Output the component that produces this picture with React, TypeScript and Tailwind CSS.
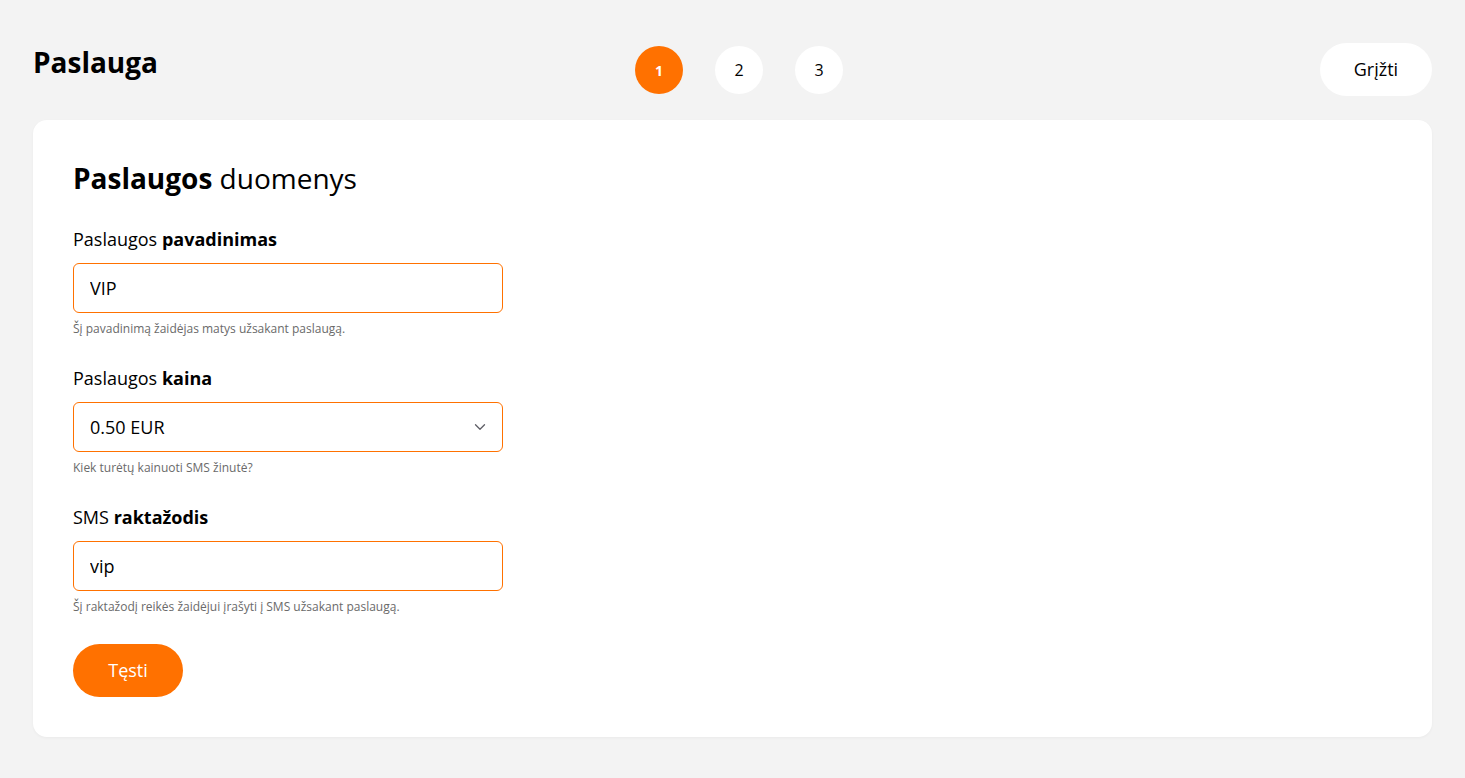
import { ChevronDown } from "lucide-react";

const ORANGE = "bg-[#ff7100]";

function Field({
  label,
  strong,
  help,
  children,
}: {
  label: string;
  strong: string;
  help: string;
  children: React.ReactNode;
}) {
  return (
    <div className="flex flex-col">
      <label className="text-[18px] leading-6 text-black">
        {label} <span className="font-bold">{strong}</span>
      </label>
      <div className="mt-3">{children}</div>
      <p className="mt-2 text-[12px] leading-4 text-[#6a6a6a]">{help}</p>
    </div>
  );
}

export default function App() {
  const steps = [1, 2, 3];

  return (
    <div
      className="min-h-screen bg-[#f3f3f3] px-[33px] pt-[43px] pb-10 text-black"
      style={{ fontFamily: "'Open Sans', Lato, sans-serif" }}
    >
      {/* Header */}
      <div className="flex items-start justify-between">
        <h1 className="mt-[3px] text-[28px] font-bold leading-8">Paslauga</h1>

        <div className="mt-[3px] flex gap-8">
          {steps.map((s) =>
            s === 1 ? (
              <div
                key={s}
                className={`flex h-12 w-12 items-center justify-center rounded-full ${ORANGE} text-[14px] font-bold text-white`}
              >
                {s}
              </div>
            ) : (
              <div
                key={s}
                className="flex h-12 w-12 items-center justify-center rounded-full bg-white text-[16px] text-black"
              >
                {s}
              </div>
            )
          )}
        </div>

        <button className="h-[53px] w-[112px] rounded-full bg-white text-[18px] text-black">
          Grįžti
        </button>
      </div>

      {/* Card */}
      <div className="mt-6 rounded-[14px] bg-white p-10 shadow-[0_1px_3px_rgba(0,0,0,0.04)]">
        <h2 className="text-[28px] leading-9">
          <span className="font-bold">Paslaugos</span> duomenys
        </h2>

        <div className="mt-[31px] flex w-[430px] flex-col gap-[29px]">
          <Field
            label="Paslaugos"
            strong="pavadinimas"
            help="Šį pavadinimą žaidėjas matys užsakant paslaugą."
          >
            <input
              defaultValue="VIP"
              className="h-[50px] w-full rounded-md border border-[#ff7100] px-4 text-[18px] text-black outline-none"
            />
          </Field>

          <Field
            label="Paslaugos"
            strong="kaina"
            help="Kiek turėtų kainuoti SMS žinutė?"
          >
            <div className="flex h-[50px] w-full items-center justify-between rounded-md border border-[#ff7100] pl-4 pr-[13px] text-[18px]">
              <span>0.50 EUR</span>
              <ChevronDown size={18} strokeWidth={1.75} className="text-[#5f5f66]" />
            </div>
          </Field>

          <Field
            label="SMS"
            strong="raktažodis"
            help="Šį raktažodį reikės žaidėjui įrašyti į SMS užsakant paslaugą."
          >
            <input
              defaultValue="vip"
              className="h-[50px] w-full rounded-md border border-[#ff7100] px-4 text-[18px] text-black outline-none"
            />
          </Field>

          <div>
            <button
              className={`h-[53px] w-[110px] rounded-full ${ORANGE} text-[18px] text-white`}
            >
              Tęsti
            </button>
          </div>
        </div>
      </div>
    </div>
  );
}
